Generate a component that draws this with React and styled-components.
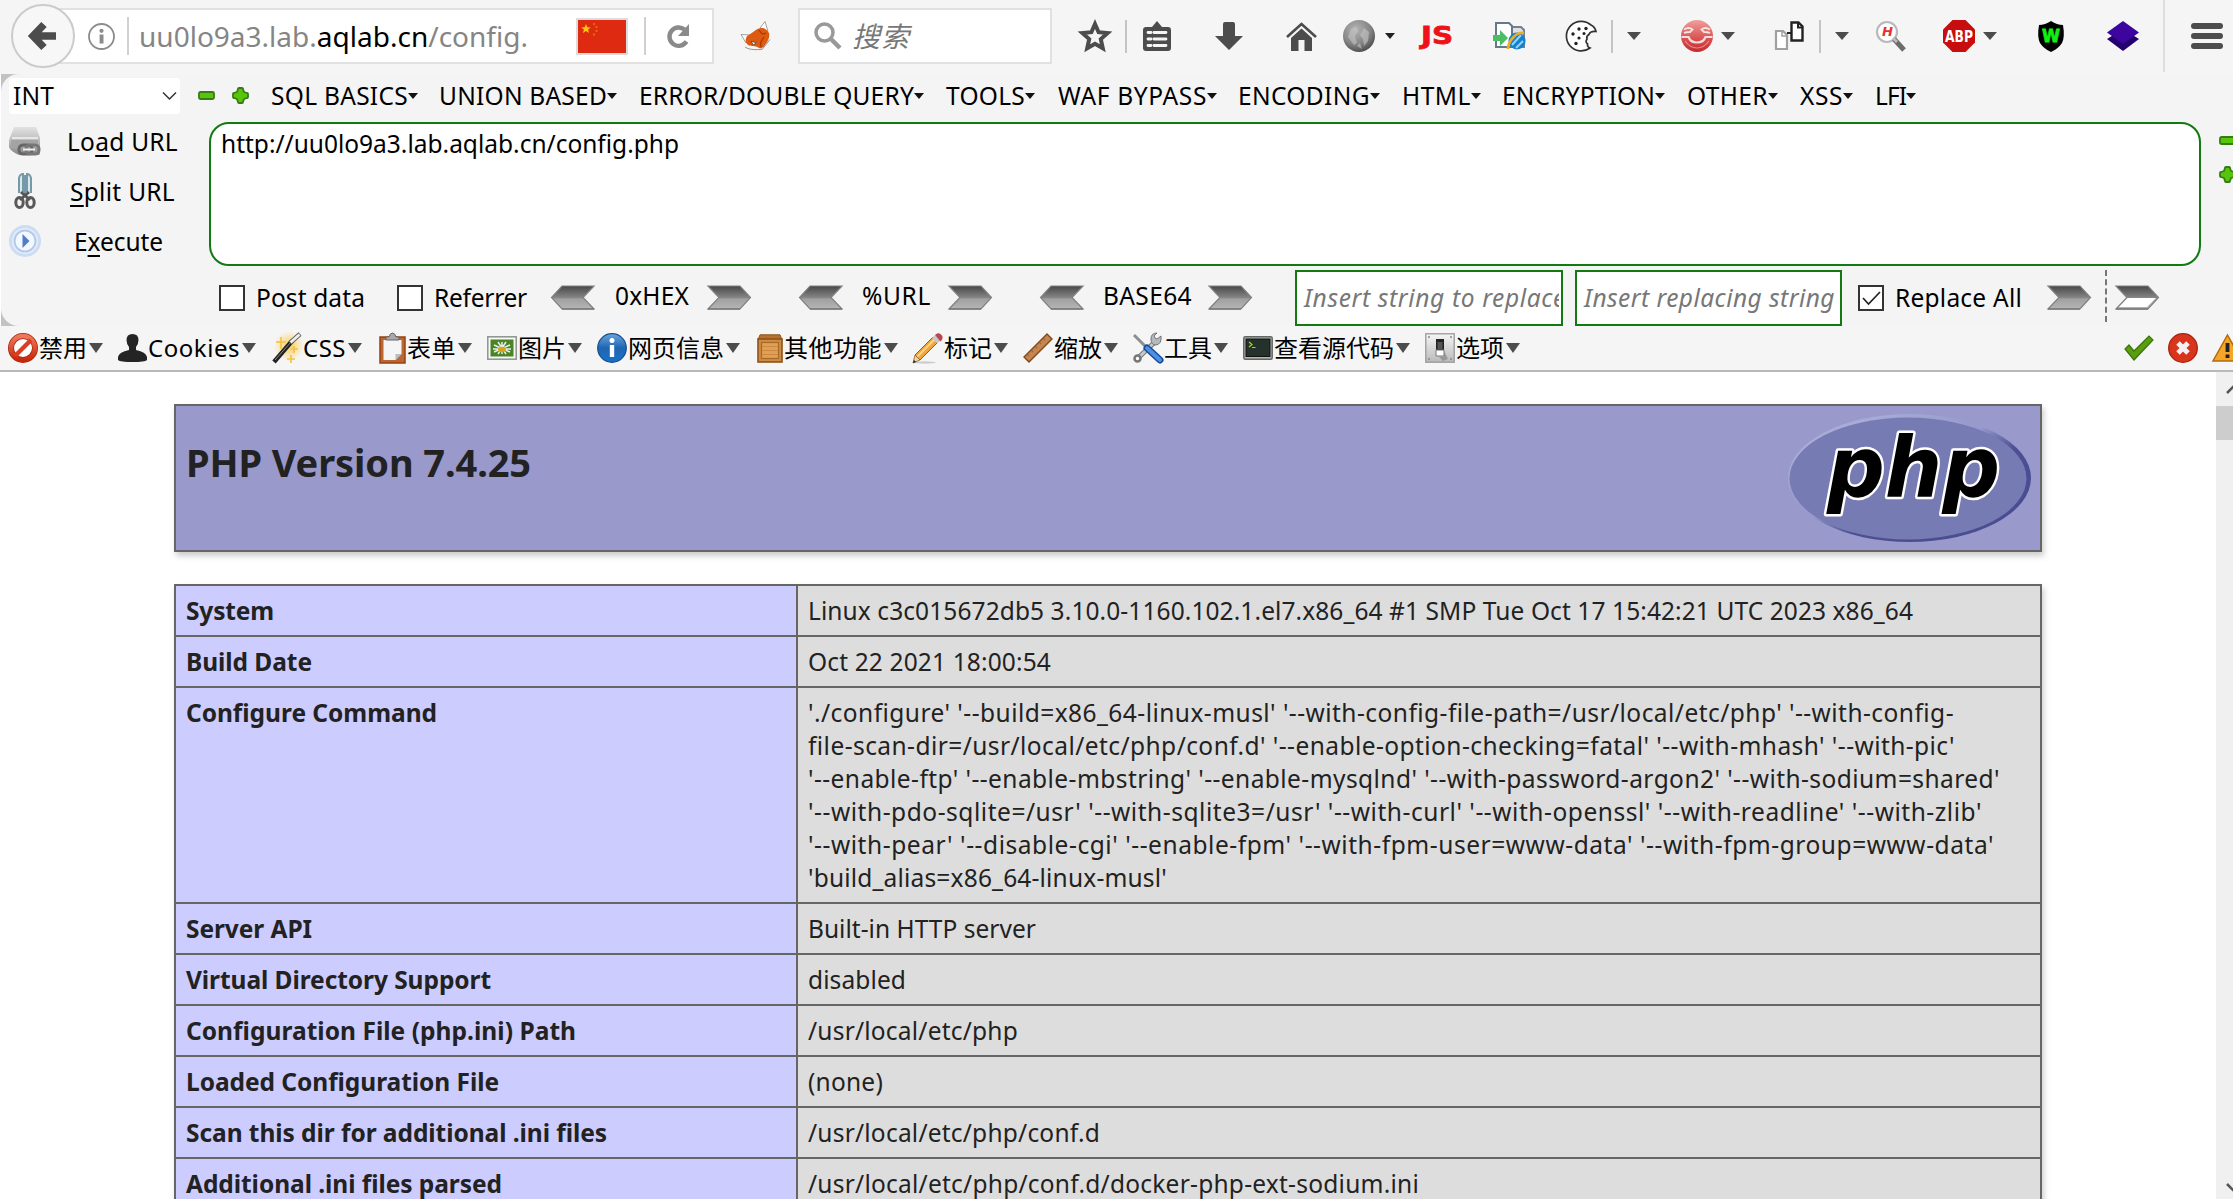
import React, { useLayoutEffect, useRef, useState } from "react";
import styled, { createGlobalStyle, css } from "styled-components";

const GlobalStyle = createGlobalStyle`
  * { box-sizing: border-box; }
  html, body { margin: 0; height: 1199px; overflow: hidden; background: #fff; }
  body { font-family: "Noto Sans", "Noto Sans CJK SC", sans-serif; font-size: 24.5px; line-height: 33px; color: #000; }
  svg { display: block; flex: none; overflow: visible; }
`;

/* ---------- text that fills a set width ---------- */

const FitBox = styled.span`
  display: block;
  flex: none;
  width: ${(p) => p.$w}px;
  margin-left: ${(p) => p.$ml || 0}px;
  white-space: pre;
`;

function Fit({ w, ml, className, children }) {
  const ref = useRef(null);
  const [spacing, setSpacing] = useState(0);
  useLayoutEffect(() => {
    const el = ref.current;
    const natural = el.getBoundingClientRect().width;
    setSpacing((w - natural) / el.textContent.length);
  }, [w]);
  return (
    <FitBox $w={w} $ml={ml} className={className}>
      <span ref={ref} style={{ letterSpacing: `${spacing}px` }}>{children}</span>
    </FitBox>
  );
}

/* ---------- shared pieces ---------- */

const Page = styled.div`
  width: 2233px;
  height: 1199px;
  overflow: hidden;
  display: flex;
  flex-direction: column;
  background: #fff;
`;

const Slot = styled.div`
  flex: none;
  display: flex;
  align-items: center;
  justify-content: center;
  width: ${(p) => p.$w}px;
  margin-left: ${(p) => p.$ml || 0}px;
`;

const Divider = styled.div`
  flex: none;
  width: 2px;
  height: ${(p) => p.$h || 33}px;
  margin-left: ${(p) => p.$ml || 0}px;
  background: ${(p) => p.$c || "#c4c4c4"};
`;

const Caret = ({ w = 14, h = 8, color = "#4c4c4c" }) => (
  <svg width={w} height={h} viewBox="0 0 14 8" preserveAspectRatio="none"><path d="M0 0h14L7 8z" fill={color} /></svg>
);

/* ---------- navigation bar ---------- */

const NavBar = styled.header`
  display: flex;
  align-items: center;
  height: 74px;
  padding-bottom: 2px;
  background: #f5f5f5;
`;

const BackButton = styled.button`
  flex: none;
  z-index: 1;
  display: flex;
  align-items: center;
  justify-content: center;
  width: 64px;
  height: 64px;
  margin: 0 0 0 11px;
  padding: 0;
  border: 2px solid #cbcbcb;
  border-radius: 50%;
  background: #f7f7f7;
`;

const field = css`
  flex: none;
  display: flex;
  align-items: center;
  height: 56px;
  border: 2px solid #e1e1e1;
  background: #fff;
`;

const UrlBox = styled.div`
  ${field}
  width: 671px;
  margin-left: -32px;
  padding-left: 43px;
  font-size: 28px;
  color: #858585;
  b { font-weight: 400; color: #000; }
`;

const SearchBox = styled.div`
  ${field}
  width: 254px;
  margin-left: 26px;
  padding-left: 14px;
  font-size: 28px;
  font-style: italic;
  color: #777;
`;

const Flag = styled.div`
  flex: none;
  width: 52px;
  height: 37px;
  margin-left: 48px;
  border: 2px solid #dcdcdc;
  background: #dd2a10;
`;

const dark = "#4c4c4c";

const NavIcons = {
  back: (
    <svg width="28" height="30" viewBox="0 0 28 30"><path d="M15 3.500L4 15l11 11.500M4 15h23" fill="none" stroke={dark} strokeWidth="7.500" /></svg>
  ),
  info: (
    <svg width="27" height="27" viewBox="0 0 27 27">
      <circle cx="13.500" cy="13.500" r="12.500" fill="none" stroke="#8c8c8c" strokeWidth="1.800" />
      <circle cx="13.500" cy="7.800" r="2.100" fill="#8c8c8c" /><path d="M11.600 11.500h3.900v9h-3.900z" fill="#8c8c8c" />
    </svg>
  ),
  flag: (
    <svg width="48" height="33" viewBox="0 0 48 33">
      <path d="M8 4l1.300 3.200 3.500.2-2.700 2.200.9 3.400-3-1.900-3 1.900.9-3.400-2.700-2.200 3.500-.2z" fill="#fdc412" />
      <g fill="#e8640f"><circle cx="16" cy="4" r="1.200" /><circle cx="18.500" cy="7" r="1.200" /><circle cx="18.500" cy="11" r="1.200" /><circle cx="16" cy="14.500" r="1.200" /></g>
    </svg>
  ),
  reload: (
    <svg width="23" height="26" viewBox="0 0 23 26">
      <path d="M19.500 18.500A9.200 9.200 0 1 1 17.500 6.500" fill="none" stroke="#8a8a8a" strokeWidth="4.400" />
      <path d="M22 1v12H11z" fill="#8a8a8a" />
    </svg>
  ),
  fox: (
    <svg width="32" height="30" viewBox="0 0 32 30">
      <path d="M1 13.500l5 8.500 4-8zM20 7l5-6.500 3 10z" fill="#fff" stroke="#888" strokeWidth=".8" />
      <path d="M7 15c6-3 9-8 15-8 3 0 5 2 7 5 1 4-1 8-4 12-2 3-4 4-6 3-4-3-8-1-11-3-3-3-3-5-1-9z" fill="#dd5a10" />
      <path d="M19 9c2 3 3 5 7 3M24 16c-3 4-4 6-3 10" fill="none" stroke="#9c3a08" strokeWidth="1.200" />
      <path d="M11 20.500l5 1-2.500 2.500z" fill="#fff" stroke="#333" strokeWidth=".7" />
      <path d="M5 26c5 3.500 13 2.500 17 2.500l8-10" fill="none" stroke="#888" strokeWidth=".9" />
    </svg>
  ),
  search: (
    <svg width="28" height="28" viewBox="0 0 28 28">
      <circle cx="10.500" cy="10.500" r="8.500" fill="none" stroke="#999" strokeWidth="3.500" /><path d="M16.500 16.500L26 26" stroke="#999" strokeWidth="4.500" />
    </svg>
  ),
  star: (
    <svg width="32" height="33" viewBox="0 0 32 33">
      <path d="M16 4l3.600 8.200 9 .9-6.800 6 2 9.200L16 23.700l-7.800 4.600 2-9.200-6.800-6 9-.9z" fill="none" stroke={dark} strokeWidth="4" strokeLinejoin="miter" />
    </svg>
  ),
  list: (
    <svg width="28" height="30" viewBox="0 0 28 30">
      <path d="M3 6h6l5-6 5 6h6a3 3 0 0 1 3 3v18a3 3 0 0 1-3 3H3a3 3 0 0 1-3-3V9a3 3 0 0 1 3-3z" fill={dark} />
      <path d="M5 11.500h3M5 18h3M5 24.500h3M11 11.500h12M11 18h12M11 24.500h12" stroke="#f5f5f5" strokeWidth="2.800" strokeLinecap="round" />
    </svg>
  ),
  down: (
    <svg width="28" height="28" viewBox="0 0 28 28"><path d="M8 2q0-2 2-2h8q2 0 2 2v12h8L14 28 0 14h8z" fill={dark} /></svg>
  ),
  home: (
    <svg width="31" height="29" viewBox="0 0 31 29">
      <path d="M1 15L15.500 2 30 15" fill="none" stroke={dark} strokeWidth="2.600" />
      <path d="M15.500 6.500L26 16v13h-7.500V18h-6v11H5V16z" fill={dark} />
    </svg>
  ),
  globe: (
    <svg width="32" height="32" viewBox="0 0 32 32">
      <defs><radialGradient id="gl" cx="40%" cy="30%" r="75%"><stop offset="0" stopColor="#b4b4b4" /><stop offset=".6" stopColor="#858585" /><stop offset="1" stopColor="#484848" /></radialGradient></defs>
      <circle cx="16" cy="16" r="16" fill="url(#gl)" />
      <path d="M5 17l3-8 5-3 2 5-3 5 2 7-3 2zM17 15l4-7 5 4-1 9-4 5-1-7zM14 26l3-3 2 6z" fill="#c4c4c4" opacity=".6" />
    </svg>
  ),
  js: (
    <svg width="32" height="32" viewBox="0 0 32 32">
      <text x="0" y="24" textLength="32" lengthAdjust="spacingAndGlyphs" fontFamily="'DejaVu Sans', sans-serif" fontWeight="700" fontSize="24" fill="#ee1218" stroke="#ee1218" strokeWidth=".8">JS</text>
    </svg>
  ),
  ie: (
    <svg width="32" height="30" viewBox="0 0 32 30">
      <path d="M19 6h9l3 3v17H18z" fill="#dde1e5" stroke="#777f88" strokeWidth="2" />
      <path d="M3 2h13l3 3v21H3z" fill="#fff" stroke="#66788c" strokeWidth="2" />
      <path d="M0 14h7V9l8 8-8 8v-5H0z" fill="#4bbd62" />
      <circle cx="24" cy="20" r="8.500" fill="#167fce" /><path d="M19 24l9-10M23 27l7-7" stroke="#8dd6fa" strokeWidth="2" />
      <path d="M15 28c0-8 9-18 16-16" fill="none" stroke="#f2ae18" strokeWidth="2.600" />
    </svg>
  ),
  cookie: (
    <svg width="32" height="32" viewBox="0 0 32 32">
      <path d="M26 5A14.800 14.800 0 1 0 25 28q-3-1-2.500-4-2.500-2-.5-5-1-3 2-4.500Q25 11 31 11.500 30 7 26 5z" fill="#fff" stroke="#333" strokeWidth="1.700" />
      <g fill="#222"><circle cx="14" cy="9" r="1.700" /><circle cx="21" cy="8.500" r="1.700" /><circle cx="8" cy="14" r="1.700" /><circle cx="19" cy="13.500" r="1.500" /><circle cx="14" cy="18" r="1.600" /><circle cx="11" cy="23.500" r="1.700" /></g>
    </svg>
  ),
  redFace: (
    <svg width="32" height="32" viewBox="0 0 32 32">
      <defs><linearGradient id="rf" x1="0" y1="0" x2="0" y2="1"><stop offset="0" stopColor="#ef9f9d" /><stop offset=".6" stopColor="#d8504f" /><stop offset="1" stopColor="#c42a30" /></linearGradient></defs>
      <circle cx="16" cy="16" r="16" fill="url(#rf)" />
      <path d="M3 9.500q5-3 8.500 0L9 12q-4 0-6 1M29 9.500q-5-3-8.500 0L23 12q4 0 6 1" fill="none" stroke="#f8e4e3" strokeWidth="1.800" />
      <path d="M.5 17h7q2 5.500 8.500 5.500t8.500-5.500h7" fill="none" stroke="#f5dcdb" strokeWidth="2.200" />
      <path d="M4 21q5 7 12 7t12-7" fill="none" stroke="#e88d8a" strokeWidth="1.200" />
    </svg>
  ),
  pages: (
    <svg width="30" height="30" viewBox="0 0 30 30">
      <path d="M2 10h7l4 4v14H2z" fill="#fff" stroke="#a0a0a0" strokeWidth="2.200" /><path d="M8 10v5h5" fill="none" stroke="#a0a0a0" strokeWidth="1.500" />
      <path d="M17.500 1.500h7l4 4v14h-11z" fill="#fff" stroke="#222" strokeWidth="2.400" /><path d="M24 1.500v5h4M13 12h4" fill="none" stroke="#222" strokeWidth="2" />
    </svg>
  ),
  hMag: (
    <svg width="30" height="32" viewBox="0 0 30 32">
      <circle cx="11" cy="12" r="10" fill="#fff" stroke="#b9b9b9" strokeWidth="2.200" />
      <path d="M18 19l10 11" stroke="#6c6c6c" strokeWidth="5" /><path d="M17 18l4 4" stroke="#bbb" strokeWidth="3" />
      <text x="6" y="16" fontFamily="'DejaVu Sans', sans-serif" fontWeight="700" fontStyle="oblique" fontSize="12" textLength="11" lengthAdjust="spacingAndGlyphs" fill="#ec3030">H</text>
    </svg>
  ),
  abp: (
    <svg width="32" height="32" viewBox="0 0 32 32">
      <path d="M9.500 0h13L32 9.500v13L22.500 32h-13L0 22.500v-13z" fill="#c70d0d" />
      <text x="2" y="21.500" textLength="28" lengthAdjust="spacingAndGlyphs" fontFamily="'DejaVu Sans', sans-serif" fontWeight="700" fontSize="15.500" fill="#fff">ABP</text>
    </svg>
  ),
  shield: (
    <svg width="26" height="31" viewBox="0 0 26 31">
      <path d="M13 0q6 4 12 4 2 12-1 18-4 6-11 9Q6 28 2 22-1 16 1 4q6 0 12-4z" fill="#000" />
      <text x="4" y="20.500" textLength="18" lengthAdjust="spacingAndGlyphs" fontFamily="'DejaVu Sans', sans-serif" fontWeight="700" fontSize="17" fill="#12f012" stroke="#12f012" strokeWidth=".8">W</text>
    </svg>
  ),
  stack: (
    <svg width="32" height="30" viewBox="0 0 32 30"><path d="M0 18l16-10 16 10-16 12z" fill="#22006e" /><path d="M16 0l16 11.500L16 23 0 11.500z" fill="#3d049e" /></svg>
  ),
  burger: (
    <svg width="32" height="26" viewBox="0 0 32 26"><path d="M3 3h26M3 13h26M3 23h26" stroke={dark} strokeWidth="6" strokeLinecap="round" /></svg>
  ),
};

const navTools = [
  ["star", 27, 32], ["divider", 14], ["list", 16, 28], ["down", 44, 28], ["home", 43, 30],
  ["globe", 27, 32], ["miniCaret", 10, 10], ["js", 26, 32], ["ie", 40, 32], ["cookie", 40, 32],
  ["divider", 14], ["caret", 14, 14], ["redFace", 40, 32], ["caret", 8, 14], ["pages", 39, 30],
  ["divider", 15], ["caret", 14, 14], ["hMag", 27, 30], ["abp", 37, 32], ["caret", 8, 14],
  ["shield", 41, 26], ["stack", 43, 32], ["tall", 24], ["burger", 26, 32],
];

function NavTool({ kind, ml, w }) {
  if (kind === "divider") return <Divider $ml={ml} />;
  if (kind === "tall") return <Divider $ml={ml} $h={72} $c="#dedede" />;
  if (kind === "caret") return <Slot $ml={ml} $w={w}><Caret /></Slot>;
  if (kind === "miniCaret") return <Slot $ml={ml} $w={w}><Caret w={10} h={6} color="#222" /></Slot>;
  return <Slot $ml={ml} $w={w}>{NavIcons[kind]}</Slot>;
}

/* ---------- hack bar ---------- */

const HackShell = styled.section`
  height: 252px;
  margin-left: 1px;
  background: #c2c2c2;
`;

const HackPanel = styled.div`
  height: 252px;
  border-radius: 18px 0 0 18px;
  background: #f4f4f4;
`;

const MenuRow = styled.nav`
  display: flex;
  align-items: center;
  height: 48px;
  padding: 0 0 5px 8px;
`;

const Select = styled.div`
  flex: none;
  display: flex;
  align-items: center;
  width: 171px;
  height: 36px;
  padding-left: 2px;
  border-radius: 3px;
  background: #fff;
`;

const HackBody = styled.div`
  display: flex;
  height: 144px;
`;

const ActionList = styled.div`
  flex: none;
  width: 208px;
  margin-top: -6px;
`;

const Action = styled.div`
  display: flex;
  align-items: center;
  height: 50px;
  padding-left: 8px;
  u { text-underline-offset: 4px; text-decoration-thickness: 2px; }
`;

const UrlArea = styled.div`
  flex: none;
  width: 1992px;
  height: 144px;
  padding: 3px 0 0 10px;
  border: 2px solid #117a11;
  border-radius: 20px;
  background: #fff;
`;

const SideButtons = styled.div`
  display: flex;
  flex-direction: column;
  gap: 21px;
  padding: 14px 0 0 18px;
  overflow: hidden;
`;

const OptionRow = styled.div`
  display: flex;
  align-items: center;
  height: 60px;
  padding: 4px 0 0 218px;
`;

const OptionText = styled.div`
  flex: none;
  padding-bottom: 2px;
  margin-left: 11px;
`;

const Check = styled.span`
  flex: none;
  width: 26px;
  height: 26px;
  margin-left: ${(p) => p.$ml || 0}px;
  border: 2px solid #333;
  background: #fff;
`;

const Codec = styled.div`
  display: flex;
  align-items: center;
  margin-left: ${(p) => p.$ml}px;
  padding-bottom: 2px;
`;

const CodecLabel = styled.div`
  padding-bottom: 3px;
  margin: 0 ${(p) => p.$r}px 0 ${(p) => p.$l}px;
`;

const ReplaceInput = styled.div`
  flex: none;
  display: flex;
  align-items: center;
  width: ${(p) => p.$w}px;
  height: 56px;
  margin-left: ${(p) => p.$ml}px;
  padding-bottom: 1px;
  border: 2px solid #117a11;
  background: #fff;
  color: #777;
  font-style: italic;
`;

const InputClip = styled.div`
  width: 100%;
  margin: 0 2px;
  padding-left: 5px;
  overflow: hidden;
`;

const Dashed = styled.div`
  flex: none;
  height: 52px;
  margin: 0 8px 4px 14px;
  border-left: 2px dashed #777;
`;

const Chevron = ({ left, hollow }) => (
  <svg width="44" height="25" viewBox="0 0 44 25">
    <defs>
      <linearGradient id="cv" x1="0" y1="0" x2="0" y2="1">
        <stop offset="0" stopColor="#474747" /><stop offset=".5" stopColor="#858585" /><stop offset=".56" stopColor="#a0a0a0" /><stop offset="1" stopColor="#b5b5b5" />
      </linearGradient>
    </defs>
    <g transform={left ? "matrix(-1 0 0 1 44 0)" : undefined}>
      <path d="M1 1h32l10.500 11.500L33 24H1l11-11.500z" fill="url(#cv)" stroke="#808080" strokeWidth="1.200" />
      {hollow && <path d="M12.500 13H41l-9 9H4z" fill="#fff" />}
      <path d="M1 24h32" stroke="#777" strokeWidth="1.500" />
    </g>
  </svg>
);

const Minus = () => (
  <svg width="17" height="9" viewBox="0 0 17 9"><rect x="1" y="1" width="15" height="7" rx="1.500" fill="#57c50a" stroke="#377b16" strokeWidth="1.800" /></svg>
);
const Plus = () => (
  <svg width="17" height="17" viewBox="0 0 17 17"><path d="M6 2q0-1 1-1h3q1 0 1 1l1 3 3 1q1 0 1 1v3q0 1-1 1l-3 1-1 3q0 1-1 1H7q-1 0-1-1l-1-3-3-1q-1 0-1-1V7q0-1 1-1l3-1z" fill="#57c50a" stroke="#377b16" strokeWidth="1.800" strokeLinejoin="round" /></svg>
);

const menus = [
  ["SQL BASICS", 23, 137], ["UNION BASED", 21, 168], ["ERROR/DOUBLE QUERY", 22, 275], ["TOOLS", 22, 79],
  ["WAF BYPASS", 23, 149], ["ENCODING", 21, 132], ["HTML", 22, 69], ["ENCRYPTION", 21, 153],
  ["OTHER", 22, 81], ["XSS", 22, 43], ["LFI", 22, 31],
];

const LoadIcon = () => (
  <svg width="32" height="30" viewBox="0 0 32 30">
    <defs><linearGradient id="ld" x1="0" y1="0" x2="0" y2="1"><stop offset="0" stopColor="#e2e2e2" /><stop offset=".5" stopColor="#bbb" /><stop offset="1" stopColor="#858585" /></linearGradient></defs>
    <path d="M5 1h22l4 11v15q0 2-2 2H10q-9-4-10-8v-7z" fill="url(#ld)" /><path d="M3 12h26" stroke="#f2f2f2" strokeWidth="1.500" /><path d="M2 14h27v8H2z" fill="#a4a4a4" />
    <rect x="10" y="19" width="13" height="9" rx="4" fill="none" stroke="#666" strokeWidth="3" /><rect x="17" y="19" width="13" height="9" rx="4" fill="none" stroke="#777" strokeWidth="3" /><path d="M14 23.500h12" stroke="#eee" strokeWidth="2" />
  </svg>
);
const SplitIcon = () => (
  <svg width="22" height="36" viewBox="0 0 22 36">
    <path d="M5 20V5q1-4 4-4v18M17 20V5q-1-4-4-4v18" fill="#dae9ef" stroke="#7799a7" strokeWidth="2" /><path d="M11 2v19" stroke="#7799a7" strokeWidth="2" />
    <path d="M7 19l9 8M15 19l-9 8" stroke="#555" strokeWidth="3" />
    <ellipse cx="5.500" cy="29.500" rx="3.700" ry="5" fill="none" stroke="#595959" strokeWidth="3" /><ellipse cx="16.500" cy="29.500" rx="3.700" ry="5" fill="none" stroke="#595959" strokeWidth="3" />
  </svg>
);
const ExecIcon = () => (
  <svg width="32" height="32" viewBox="0 0 32 32">
    <circle cx="16" cy="16" r="14.500" fill="#e6effb" stroke="#ccdcf2" strokeWidth="3" /><circle cx="16" cy="16" r="10.500" fill="#f2f8ff" stroke="#b6c9e8" strokeWidth="2" />
    <path d="M13.500 9l7 7-7 7z" fill="#4f7dca" />
  </svg>
);

/* ---------- developer toolbar ---------- */

const DevBar = styled.nav`
  display: flex;
  align-items: center;
  height: 46px;
  border-bottom: 2px solid #b9b9b9;
  background: #f5f5f5;
  overflow: hidden;
`;

const DevItem = styled.div`
  flex: none;
  display: flex;
  align-items: center;
  margin-left: ${(p) => p.$ml}px;
  font-size: 24px;
`;

const DevLabel = styled.div`
  padding-bottom: 2px;
  margin: 0 2px 0 1px;
`;

const StatusIcons = styled.div`
  flex: none;
  display: flex;
  align-items: center;
  gap: 14px;
  width: 109px;
  margin-left: auto;
`;

const DevIcons = {
  ban: (
    <svg width="30" height="30" viewBox="0 0 30 30">
      <defs><linearGradient id="bn" x1="0" y1="0" x2="0" y2="1"><stop offset="0" stopColor="#ee785c" /><stop offset="1" stopColor="#c92808" /></linearGradient></defs>
      <circle cx="15" cy="15" r="12" fill="#fff" stroke="#a9230a" strokeWidth="6" /><circle cx="15" cy="15" r="12" fill="none" stroke="url(#bn)" strokeWidth="4.500" /><path d="M7 23L23 7" stroke="#d93f20" strokeWidth="4.500" />
    </svg>
  ),
  person: (
    <svg width="29" height="28" viewBox="0 0 29 28"><path d="M14.500 0q6 0 6 6 0 4-2.500 7v3q10 2 11 7v3q-2 2-14.500 2T0 26v-3q1-5 11-7v-3Q8.500 10 8.500 6q0-6 6-6z" fill="#242424" /></svg>
  ),
  wand: (
    <svg width="30" height="30" viewBox="0 0 30 30">
      <defs><radialGradient id="wd"><stop offset="0" stopColor="#fbcf55" /><stop offset="1" stopColor="#fbcf55" stopOpacity="0" /></radialGradient></defs>
      <circle cx="17" cy="13" r="15" fill="url(#wd)" /><path d="M9 4v12M4 9h10M19 22v8M15 26h8M22 13v7M19 16h7" stroke="#f3c040" strokeWidth="1.600" />
      <path d="M2 29L20 8" stroke="#222" strokeWidth="4.500" /><path d="M18 10L28 1" stroke="#555" strokeWidth="4.500" /><path d="M18.500 9.500L27.500 1.500" stroke="#eee" strokeWidth="3" /><path d="M3 27L19 9" stroke="#888" strokeWidth="1" />
    </svg>
  ),
  clipboard: (
    <svg width="27" height="31" viewBox="0 0 27 31">
      <rect x="1" y="4" width="25" height="26" fill="#bd662f" stroke="#924316" strokeWidth="1.500" /><path d="M4.500 7h18v14l-6 6h-12z" fill="#f5f5f5" /><path d="M22.500 21l-6 6v-6z" fill="#bbb" /><path d="M7 7V4h3q1-4 3.500-4T17 4h3v3z" fill="#aaa" stroke="#666" strokeWidth="1" />
    </svg>
  ),
  image: (
    <svg width="30" height="24" viewBox="0 0 30 24">
      <rect x=".8" y=".8" width="28.400" height="22.400" fill="#f8f8f8" stroke="#8c948c" strokeWidth="1.500" /><rect x="3.500" y="3.500" width="23" height="17" fill="#4b8424" />
      <path d="M15 6v12M7 9l16 7M23 9L7 16M11 6l8 12M19 6l-8 12M6 13h18" stroke="#e9eff5" strokeWidth="1.500" /><ellipse cx="15" cy="13.500" rx="4" ry="2.800" fill="#d9a418" />
    </svg>
  ),
  info: (
    <svg width="30" height="30" viewBox="0 0 30 30">
      <defs><linearGradient id="nf" x1="0" y1="0" x2="0" y2="1"><stop offset="0" stopColor="#6aa5dc" /><stop offset=".5" stopColor="#2066b2" /><stop offset="1" stopColor="#1a71c8" /></linearGradient></defs>
      <circle cx="15" cy="15" r="14.300" fill="url(#nf)" stroke="#174e8e" strokeWidth="1.200" /><circle cx="15" cy="7.500" r="2.500" fill="#fff" /><path d="M12.800 12h4.400v12h-4.400z" fill="#fff" />
    </svg>
  ),
  crate: (
    <svg width="26" height="29" viewBox="0 0 26 29">
      <path d="M3 .8h20l2 5H1z" fill="#b8702f" stroke="#8e5319" /><rect x="1" y="5" width="24" height="23" fill="#cf8b40" stroke="#8e5319" strokeWidth="1.600" /><rect x="4.500" y="8.500" width="17" height="16" fill="#dfa054" stroke="#a7682b" strokeWidth="1.200" /><path d="M5 12.500h16M5 16.500h16M5 20.500h16" stroke="#cb8a42" />
    </svg>
  ),
  pencil: (
    <svg width="31" height="31" viewBox="0 0 31 31">
      <ellipse cx="13" cy="29.500" rx="11" ry="1.200" fill="#ccc" /><path d="M3 22L21 4l5 5L8 27z" fill="#f3a53a" stroke="#9b5c17" strokeWidth="1" /><path d="M5.500 23.500L23 6" stroke="#ffd684" strokeWidth="1.800" />
      <path d="M3 22l5 5-7 3z" fill="#f2d4a4" stroke="#8c5a24" strokeWidth=".8" /><path d="M1 30l1-3 2 2z" fill="#222" /><path d="M20 5l3-3 5.500 5.500-3 3z" fill="#c3c9d0" /><path d="M23 2q3-3 6-.5t.5 6l-1 1z" fill="#b8474f" />
    </svg>
  ),
  ruler: (
    <svg width="30" height="30" viewBox="0 0 30 30"><path d="M1 24L24 1l5 5L6 29z" fill="#c48550" stroke="#824917" strokeWidth="1.400" /><path d="M4 21l2 2M8 17l2 2M12 13l2 2M16 9l2 2M20 5l2 2" stroke="#9c6534" strokeWidth="1.100" /></svg>
  ),
  tools: (
    <svg width="30" height="30" viewBox="0 0 30 30">
      <path d="M4 26L24 7" stroke="#777" strokeWidth="5" /><path d="M4 26L24 7" stroke="#c5c9cb" strokeWidth="3" /><circle cx="4.500" cy="25.500" r="3" fill="#fff" stroke="#777" strokeWidth="2.500" /><path d="M28 3l-4 3-2-1-1-2 3-3q-6 0-6 6t5 6q6-1 5-9z" fill="#b5b9bc" stroke="#707477" />
      <path d="M1 2l12 12" stroke="#8b8f92" strokeWidth="3" /><path d="M14 15l13 12" stroke="#164a97" strokeWidth="7" strokeLinecap="round" /><path d="M14 15l13 12" stroke="#4b91e4" strokeWidth="4" strokeLinecap="round" />
    </svg>
  ),
  terminal: (
    <svg width="30" height="24" viewBox="0 0 30 24"><rect x=".8" y=".8" width="28.400" height="22.400" rx="1.500" fill="#b5b8b4" stroke="#666" strokeWidth="1.500" /><rect x="3" y="3" width="24" height="17.500" fill="#25312b" stroke="#111" /><path d="M6 6l3 2.500L6 11M9 11.500h3.500" fill="none" stroke="#9fdc17" strokeWidth="1.200" /></svg>
  ),
  toggle: (
    <svg width="30" height="30" viewBox="0 0 30 30">
      <defs><linearGradient id="tg" x1="0" y1="0" x2="0" y2="1"><stop offset="0" stopColor="#f5f5f5" /><stop offset="1" stopColor="#bababa" /></linearGradient></defs>
      <rect x=".8" y=".8" width="28.400" height="28.400" fill="url(#tg)" stroke="#999" strokeWidth="1.300" /><path d="M11 6h8v12h-8z" fill="#222" /><path d="M12.500 9h5v7h-5z" fill="#555" /><path d="M11 17h8v6h-8z" fill="#fff" stroke="#777" /><path d="M19 18l4 8-5 2-4-4h5z" fill="#888" opacity=".7" />
      <g fill="#888"><circle cx="4" cy="4" r="1" /><circle cx="26" cy="4" r="1" /><circle cx="4" cy="26" r="1" /><circle cx="26" cy="26" r="1" /></g>
    </svg>
  ),
  ok: (
    <svg width="30" height="26" viewBox="0 0 30 26"><path d="M1 14l4-4 5 6L25 1l4 4-19 20z" fill="#5a9d10" stroke="#3b7407" strokeWidth="1.200" /></svg>
  ),
  error: (
    <svg width="30" height="30" viewBox="0 0 30 30"><circle cx="15" cy="15" r="14.300" fill="#d8351c" stroke="#a9200c" strokeWidth="1.300" /><path d="M10 10l10 10M20 10L10 20" stroke="#f2f2f2" strokeWidth="5" /></svg>
  ),
  warn: (
    <svg width="30" height="28" viewBox="0 0 30 28"><path d="M15.500 1L30 27H1z" fill="#f6a52b" stroke="#b46a0b" strokeWidth="1.500" /><path d="M15.500 9v9M15.500 20.500v3.500" stroke="#222" strokeWidth="3.800" /></svg>
  ),
};

const devItems = [
  ["ban", "禁用", 8, 30, 48], ["person", "Cookies", 15, 29, 92], ["wand", "CSS", 16, 30, 43],
  ["clipboard", "表单", 17, 27, 49], ["image", "图片", 15, 30, 48], ["info", "网页信息", 15, 30, 96],
  ["crate", "其他功能", 17, 26, 98], ["pencil", "标记", 14, 31, 48], ["ruler", "缩放", 15, 30, 48],
  ["tools", "工具", 15, 30, 48], ["terminal", "查看源代码", 15, 30, 120], ["toggle", "选项", 15, 30, 48],
];

/* ---------- phpinfo page ---------- */

const Viewport = styled.main`
  flex: none;
  display: flex;
  height: 827px;
`;

const Document = styled.div`
  width: 2216px;
  padding: 32px 174px 0;
  color: #222;
`;

const Banner = styled.div`
  display: flex;
  align-items: flex-start;
  width: 1868px;
  height: 148px;
  padding: 8px 9px 0 10px;
  border: 2px solid #666;
  background: #9999cc;
  box-shadow: 2px 4px 6px #ccc;
`;

const Title = styled.h1`
  margin: 31px auto 0 0;
  font-size: 38px;
  line-height: 34px;
`;

const Info = styled.table`
  width: 1868px;
  margin-top: 32px;
  border-collapse: collapse;
  table-layout: fixed;
  box-shadow: 2px 4px 6px #ccc;
`;

const Key = styled.td`
  width: 622px;
  padding: 8px 8px 8px 10px;
  border: 2px solid #666;
  background: #ccccff;
  font-weight: 700;
  vertical-align: top;
`;

const Value = styled.td`
  padding: 8px 8px 8px 10px;
  border: 2px solid #666;
  background: #ddd;
  vertical-align: top;
`;

const Scrollbar = styled.div`
  width: 17px;
  height: 827px;
  background: #f0f0f0;
  display: flex;
  flex-direction: column;
  align-items: flex-end;
  overflow: hidden;
`;

const Thumb = styled.div`
  width: 17px;
  height: 34px;
  margin: 9px 0 auto;
  background: #cdcdcd;
`;

const PhpLogo = () => (
  <svg width="243" height="128" viewBox="0 0 243 128">
    <defs>
      <linearGradient id="edge" x1="0" y1="0" x2="1" y2="1"><stop offset="0" stopColor="#b3b7dc" /><stop offset=".45" stopColor="#9599cb" /><stop offset=".6" stopColor="#4c4f93" /><stop offset="1" stopColor="#484b90" /></linearGradient>
    </defs>
    <ellipse cx="121.500" cy="64" rx="121.500" ry="64" fill="url(#edge)" /><ellipse cx="120" cy="64.500" rx="118.500" ry="61" fill="#777bb3" />
    <text x="39" y="83" textLength="173" lengthAdjust="spacingAndGlyphs" fontFamily="'DejaVu Sans', sans-serif" fontWeight="700" fontStyle="oblique" fontSize="84" fill="#000" stroke="#fff" strokeWidth="5" strokeLinejoin="round" paintOrder="stroke">php</text>
  </svg>
);

const rows = [
  ["System", 88, [["Linux c3c015672db5 3.10.0-1160.102.1.el7.x86_64 #1 SMP Tue Oct 17 15:42:21 UTC 2023 x86_64", 1105]]],
  ["Build Date", 126, [["Oct 22 2021 18:00:54", 243]]],
  ["Configure Command", 251, [
    ["'./configure' '--build=x86_64-linux-musl' '--with-config-file-path=/usr/local/etc/php' '--with-config-", 1146],
    ["file-scan-dir=/usr/local/etc/php/conf.d' '--enable-option-checking=fatal' '--with-mhash' '--with-pic'", 1147],
    ["'--enable-ftp' '--enable-mbstring' '--enable-mysqlnd' '--with-password-argon2' '--with-sodium=shared'", 1192],
    ["'--with-pdo-sqlite=/usr' '--with-sqlite3=/usr' '--with-curl' '--with-openssl' '--with-readline' '--with-zlib'", 1174],
    ["'--with-pear' '--disable-cgi' '--enable-fpm' '--with-fpm-user=www-data' '--with-fpm-group=www-data'", 1186],
    ["'build_alias=x86_64-linux-musl'", 359],
  ]],
  ["Server API", 126, [["Built-in HTTP server", 228]]],
  ["Virtual Directory Support", 305, [["disabled", 98]]],
  ["Configuration File (php.ini) Path", 390, [["/usr/local/etc/php", 210]]],
  ["Loaded Configuration File", 313, [["(none)", 75]]],
  ["Scan this dir for additional .ini files", 421, [["/usr/local/etc/php/conf.d", 292]]],
  ["Additional .ini files parsed", 316, [["/usr/local/etc/php/conf.d/docker-php-ext-sodium.ini", 611]]],
];

export default function App() {
  return (
    <Page>
      <GlobalStyle />
      <NavBar>
        <BackButton aria-label="Back">{NavIcons.back}</BackButton>
        <UrlBox>
          {NavIcons.info}
          <Divider $ml={12} $h={38} $c="#d0d0d0" />
          <Fit ml={10} w={389}>uu0lo9a3.lab.<b>aqlab.cn</b>/config.</Fit>
          <Flag>{NavIcons.flag}</Flag>
          <Divider $ml={16} $h={38} $c="#d0d0d0" />
          <Slot $ml={21} $w={23}>{NavIcons.reload}</Slot>
        </UrlBox>
        <Slot $ml={26} $w={32}>{NavIcons.fox}</Slot>
        <SearchBox>
          {NavIcons.search}
          <Fit ml={10} w={58}>搜索</Fit>
        </SearchBox>
        {navTools.map(([kind, ml, w], i) => <NavTool key={i} kind={kind} ml={ml} w={w} />)}
      </NavBar>

      <HackShell>
        <HackPanel>
          <MenuRow>
            <Select>
              <Fit ml={2} w={41}>INT</Fit>
              <Slot $ml={108} $w={15}>
                <svg width="15" height="8" viewBox="0 0 15 8"><path d="M1 .5l6.500 6.500L14 .5" fill="none" stroke="#333" strokeWidth="1.500" /></svg>
              </Slot>
            </Select>
            <Slot $ml={18} $w={16}><Minus /></Slot>
            <Slot $ml={18} $w={16}><Plus /></Slot>
            {menus.map(([label, ml, w]) => (
              <React.Fragment key={label}>
                <Fit ml={ml} w={w}>{label}</Fit>
                <Slot $w={10}><Caret w={10} h={6} color="#111" /></Slot>
              </React.Fragment>
            ))}
          </MenuRow>
          <HackBody>
            <ActionList>
              <Action><Slot $w={32}><LoadIcon /></Slot><Fit ml={26} w={111}>Lo<u>a</u>d URL</Fit></Action>
              <Action><Slot $w={32}><SplitIcon /></Slot><Fit ml={29} w={105}><u>S</u>plit URL</Fit></Action>
              <Action><Slot $w={32}><ExecIcon /></Slot><Fit ml={33} w={89}>E<u>x</u>ecute</Fit></Action>
            </ActionList>
            <UrlArea><Fit w={458}>http://uu0lo9a3.lab.aqlab.cn/config.php</Fit></UrlArea>
            <SideButtons><Minus /><Plus /></SideButtons>
          </HackBody>
          <OptionRow>
            <Check />
            <OptionText><Fit w={109}>Post data</Fit></OptionText>
            <Check $ml={32} />
            <OptionText><Fit w={93}>Referrer</Fit></OptionText>
            <Codec $ml={24}><Chevron left /><CodecLabel $l={20} $r={18}><Fit w={74}>0xHEX</Fit></CodecLabel><Chevron /></Codec>
            <Codec $ml={48}><Chevron left /><CodecLabel $l={19} $r={17}><Fit w={69}>%URL</Fit></CodecLabel><Chevron /></Codec>
            <Codec $ml={48}><Chevron left /><CodecLabel $l={19} $r={16}><Fit w={89}>BASE64</Fit></CodecLabel><Chevron /></Codec>
            <ReplaceInput $ml={43} $w={268}><InputClip><Fit w={262}>Insert string to replace</Fit></InputClip></ReplaceInput>
            <ReplaceInput $ml={12} $w={267}><InputClip><Fit w={251}>Insert replacing string</Fit></InputClip></ReplaceInput>
            <Check $ml={16}>
              <svg width="22" height="22" viewBox="0 0 22 22"><path d="M3 11l5.500 6L20 5" fill="none" stroke="#222" strokeWidth="1.700" /></svg>
            </Check>
            <OptionText><Fit w={127}>Replace All</Fit></OptionText>
            <Codec $ml={25}><Chevron /></Codec>
            <Dashed />
            <Codec $ml={0}><Chevron hollow /></Codec>
          </OptionRow>
        </HackPanel>
      </HackShell>

      <DevBar>
        {devItems.map(([icon, label, ml, iw, tw]) => (
          <DevItem key={label} $ml={ml}>
            <Slot $w={iw}>{DevIcons[icon]}</Slot>
            <DevLabel><Fit w={tw}>{label}</Fit></DevLabel>
            <Caret w={14} h={10} />
          </DevItem>
        ))}
        <StatusIcons>{DevIcons.ok}{DevIcons.error}{DevIcons.warn}</StatusIcons>
      </DevBar>

      <Viewport>
        <Document>
          <Banner>
            <Title><Fit w={345}>PHP Version 7.4.25</Fit></Title>
            <PhpLogo />
          </Banner>
          <Info>
            <tbody>
              {rows.map(([label, lw, lines]) => (
                <tr key={label}>
                  <Key><Fit w={lw}>{label}</Fit></Key>
                  <Value>{lines.map(([text, w]) => <Fit key={text} w={w}>{text}</Fit>)}</Value>
                </tr>
              ))}
            </tbody>
          </Info>
        </Document>
        <Scrollbar>
          <svg width="6" height="25" viewBox="0 0 6 25"><path d="M0 21l6-6 6 6" fill="none" stroke="#555" strokeWidth="2.500" /></svg>
          <Thumb />
          <svg width="6" height="16" viewBox="0 0 6 16"><path d="M0 1l6 6 6-6" fill="none" stroke="#555" strokeWidth="2.500" /></svg>
        </Scrollbar>
      </Viewport>
    </Page>
  );
}
